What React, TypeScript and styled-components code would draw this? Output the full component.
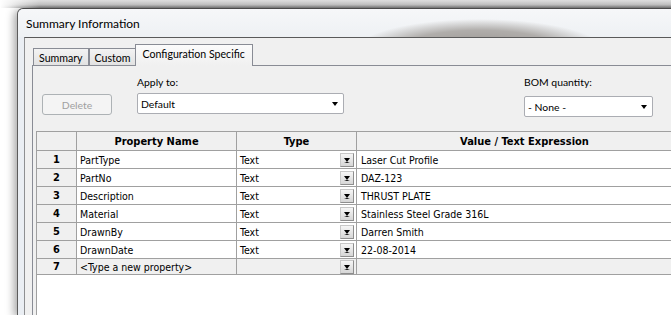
import { createGlobalStyle, styled } from "styled-components";

type Prop = { name: string; value: string };

const props: Prop[] = [
  { name: "PartType", value: "Laser Cut Profile" },
  { name: "PartNo", value: "DAZ-123" },
  { name: "Description", value: "THRUST PLATE" },
  { name: "Material", value: "Stainless Steel Grade 316L" },
  { name: "DrawnBy", value: "Darren Smith" },
  { name: "DrawnDate", value: "22-08-2014" },
];

const App = () => {
  return (
    <>
      <GlobalStyle />
      <Page>
        <TopStrip />
        <Window>
          <TitleBar>Summary Information</TitleBar>
          <ClientWrap>
            <Client>
              <TabRow>
                <Tab>Summary</Tab>
                <Tab>Custom</Tab>
                <Tab $active>Configuration Specific</Tab>
              </TabRow>
              <Panel>
                <ControlRow>
                  <DeleteButton disabled>Delete</DeleteButton>
                  <FieldGroup $width={207} $gap={3} $left={25}>
                    <Label>Apply to:</Label>
                    <Combo>
                      Default
                      <Arrow />
                    </Combo>
                  </FieldGroup>
                  <FieldGroup $width={129} $gap={6} $left={180}>
                    <Label>BOM quantity:</Label>
                    <Combo>
                      - None -
                      <Arrow />
                    </Combo>
                  </FieldGroup>
                </ControlRow>
                <TableArea>
                  <Grid>
                    <colgroup>
                      <col style={{ width: 40 }} />
                      <col style={{ width: 160 }} />
                      <col style={{ width: 120 }} />
                      <col style={{ width: 336 }} />
                    </colgroup>
                    <thead>
                      <tr>
                        <HeadCell />
                        <HeadCell>Property Name</HeadCell>
                        <HeadCell>Type</HeadCell>
                        <HeadCell>Value / Text Expression</HeadCell>
                      </tr>
                    </thead>
                    <tbody>
                      {props.map((p, i) => (
                        <tr key={p.name}>
                          <NumCell>{i + 1}</NumCell>
                          <Cell>{p.name}</Cell>
                          <Cell>
                            <TypeBox>
                              Text
                              <DropButton />
                            </TypeBox>
                          </Cell>
                          <Cell $pad={4}>{p.value}</Cell>
                        </tr>
                      ))}
                      <tr>
                        <NumCell $short>7</NumCell>
                        <Cell $gray $short>
                          &lt;Type a new property&gt;
                        </Cell>
                        <Cell $gray $short>
                          <TypeBox>
                            <DropButton />
                          </TypeBox>
                        </Cell>
                        <Cell $gray $short />
                      </tr>
                    </tbody>
                  </Grid>
                </TableArea>
              </Panel>
            </Client>
          </ClientWrap>
        </Window>
      </Page>
    </>
  );
};

const GlobalStyle = createGlobalStyle`
  body {
    margin: 0;
    background: #fff;
    overflow: hidden;
  }
`;

const Page = styled.div`
  width: 671px;
  height: 315px;
  overflow: hidden;
  display: flex;
  flex-direction: column;
  background: #fff;
  font-family: "Segoe UI", Lato, "Open Sans", sans-serif;
  font-size: 10.4px;
  color: #000;
`;

const TopStrip = styled.div`
  height: 8px;
  flex: none;
  background: linear-gradient(to right, #fff 0, rgba(255, 255, 255, 0) 40px),
    linear-gradient(#dedede, #c4c4c4 60%, #7e7e7e);
`;

const Window = styled.div`
  flex: 1;
  width: 720px;
  margin-left: 17px;
  display: flex;
  flex-direction: column;
  border-left: 1px solid #5c5c5c;
  border-top: 1px solid #4a4a4a;
  border-top-left-radius: 6px;
  background: #eaeef3;
  box-shadow: -3px 2px 8px rgba(0, 0, 0, 0.35);
`;

const TitleBar = styled.div`
  height: 28px;
  flex: none;
  display: flex;
  align-items: center;
  padding-left: 8px;
  border-top-left-radius: 6px;
  font-size: 12px;
  background: radial-gradient(
      ellipse 125px 32px at 462px 42px,
      rgba(145, 140, 135, 0.95) 0,
      rgba(160, 156, 152, 0.8) 65%,
      rgba(200, 200, 200, 0) 100%
    ),
    linear-gradient(#f6f7f9, #eef1f4);
`;

const ClientWrap = styled.div`
  flex: 1;
  display: flex;
  padding-left: 6px;
`;

const Client = styled.div`
  flex: 1;
  display: flex;
  flex-direction: column;
  border-left: 1px solid #8e8f91;
  border-top: 1px solid #5a5a5a;
  background: #f0f0f0;
  padding: 6px 0 0 7px;
`;

const TabRow = styled.div`
  height: 22px;
  flex: none;
  display: flex;
  align-items: flex-end;
  margin-bottom: -1px;
  position: relative;
  z-index: 1;
  font-size: 10.6px;
`;

const Tab = styled.div<{ $active?: boolean }>`
  box-sizing: border-box;
  height: ${(p) => (p.$active ? 22 : 17)}px;
  margin-bottom: ${(p) => (p.$active ? 0 : 1)}px;
  padding: ${(p) => (p.$active ? "0 7px 3px" : "1px 5px 0")};
  margin-left: ${(p) => (p.$active ? -2 : 0)}px;
  display: flex;
  align-items: center;
  border: 1px solid #898c95;
  border-bottom: none;
  background: ${(p) =>
    p.$active ? "linear-gradient(#fbfbfb, #f0f0f0)" : "linear-gradient(#f3f3f3, #e2e2e2)"};
  & + & {
    border-left: ${(p) => (p.$active ? "1px solid #898c95" : "none")};
  }
  &:first-child {
    margin-left: 1px;
  }
`;

const Panel = styled.div`
  flex: 1;
  display: flex;
  flex-direction: column;
  border-left: 1px solid #898c95;
  border-top: 1px solid #898c95;
  background: #f0f0f0;
`;

const ControlRow = styled.div`
  height: 65px;
  flex: none;
  display: flex;
  align-items: flex-start;
  padding-left: 9px;
`;

const DeleteButton = styled.button`
  box-sizing: border-box;
  width: 70px;
  height: 21px;
  margin-top: 28px;
  border: 1px solid #adb2b5;
  border-radius: 3px;
  background: #f4f4f4;
  color: #a0a0a0;
  font: inherit;
  padding: 0;
`;

const FieldGroup = styled.div<{ $width: number; $gap: number; $left: number }>`
  width: ${(p) => p.$width}px;
  margin-left: ${(p) => p.$left}px;
  padding-top: 8px;
  display: flex;
  flex-direction: column;
  gap: ${(p) => p.$gap}px;
`;

const Label = styled.div`
  height: 16px;
  line-height: 16px;
`;

const Combo = styled.div`
  box-sizing: border-box;
  height: 21px;
  display: flex;
  align-items: center;
  justify-content: space-between;
  padding: 0 5px 0 3px;
  border: 1px solid #abadb3;
  border-radius: 2px;
  background: #fff;
`;

const Arrow = styled.span`
  width: 0;
  height: 0;
  border-left: 3.5px solid transparent;
  border-right: 3.5px solid transparent;
  border-top: 4px solid #000;
  margin-top: 1px;
`;

const TableArea = styled.div`
  flex: 1;
  margin-left: 3px;
  border-left: 1px solid #a0a0a0;
  border-top: 1px solid #a0a0a0;
  background: #fff;
`;

const Grid = styled.table`
  table-layout: fixed;
  width: 656px;
  border-collapse: separate;
  border-spacing: 0;
  font-family: Tahoma, "DejaVu Sans", sans-serif;
  font-size: 10.5px;
  font-stretch: condensed;
`;

const HeadCell = styled.th`
  height: 18px;
  padding: 0;
  background: #f0f0f0;
  border-right: 1px solid #a0a0a0;
  border-bottom: 1px solid #a0a0a0;
  font-weight: bold;
  font-size: 11px;
  text-align: center;
`;

const Cell = styled.td<{ $gray?: boolean; $short?: boolean; $pad?: number }>`
  height: ${(p) => (p.$short ? 15 : 17)}px;
  padding: 0 0 0 ${(p) => p.$pad ?? 3}px;
  background: ${(p) => (p.$gray ? "#f0f0f0" : "#fff")};
  border-right: 1px solid #a0a0a0;
  border-bottom: 1px solid #a0a0a0;
  white-space: nowrap;
  overflow: hidden;
`;

const NumCell = styled.td<{ $short?: boolean }>`
  height: ${(p) => (p.$short ? 15 : 17)}px;
  padding: 0;
  background: #f0f0f0;
  border-right: 1px solid #a0a0a0;
  border-bottom: 1px solid #a0a0a0;
  font-weight: bold;
  font-size: 11px;
  text-align: center;
`;

const TypeBox = styled.div`
  display: flex;
  align-items: center;
  justify-content: space-between;
  padding-right: 2px;
`;

const DropButton = styled.span`
  box-sizing: border-box;
  width: 14px;
  height: 14px;
  margin-left: auto;
  display: flex;
  align-items: flex-end;
  justify-content: center;
  padding-bottom: 3px;
  border: 1px solid #8e8e8e;
  border-top-color: #c8c8c8;
  border-left-color: #c8c8c8;
  background: linear-gradient(#f6f6f6, #d6d6d6);
  &::after {
    content: "";
    width: 0;
    height: 0;
    border-left: 3.5px solid transparent;
    border-right: 3.5px solid transparent;
    border-top: 4px solid #000;
    border-bottom: 1px solid #000;
  }
`;

export default App;
